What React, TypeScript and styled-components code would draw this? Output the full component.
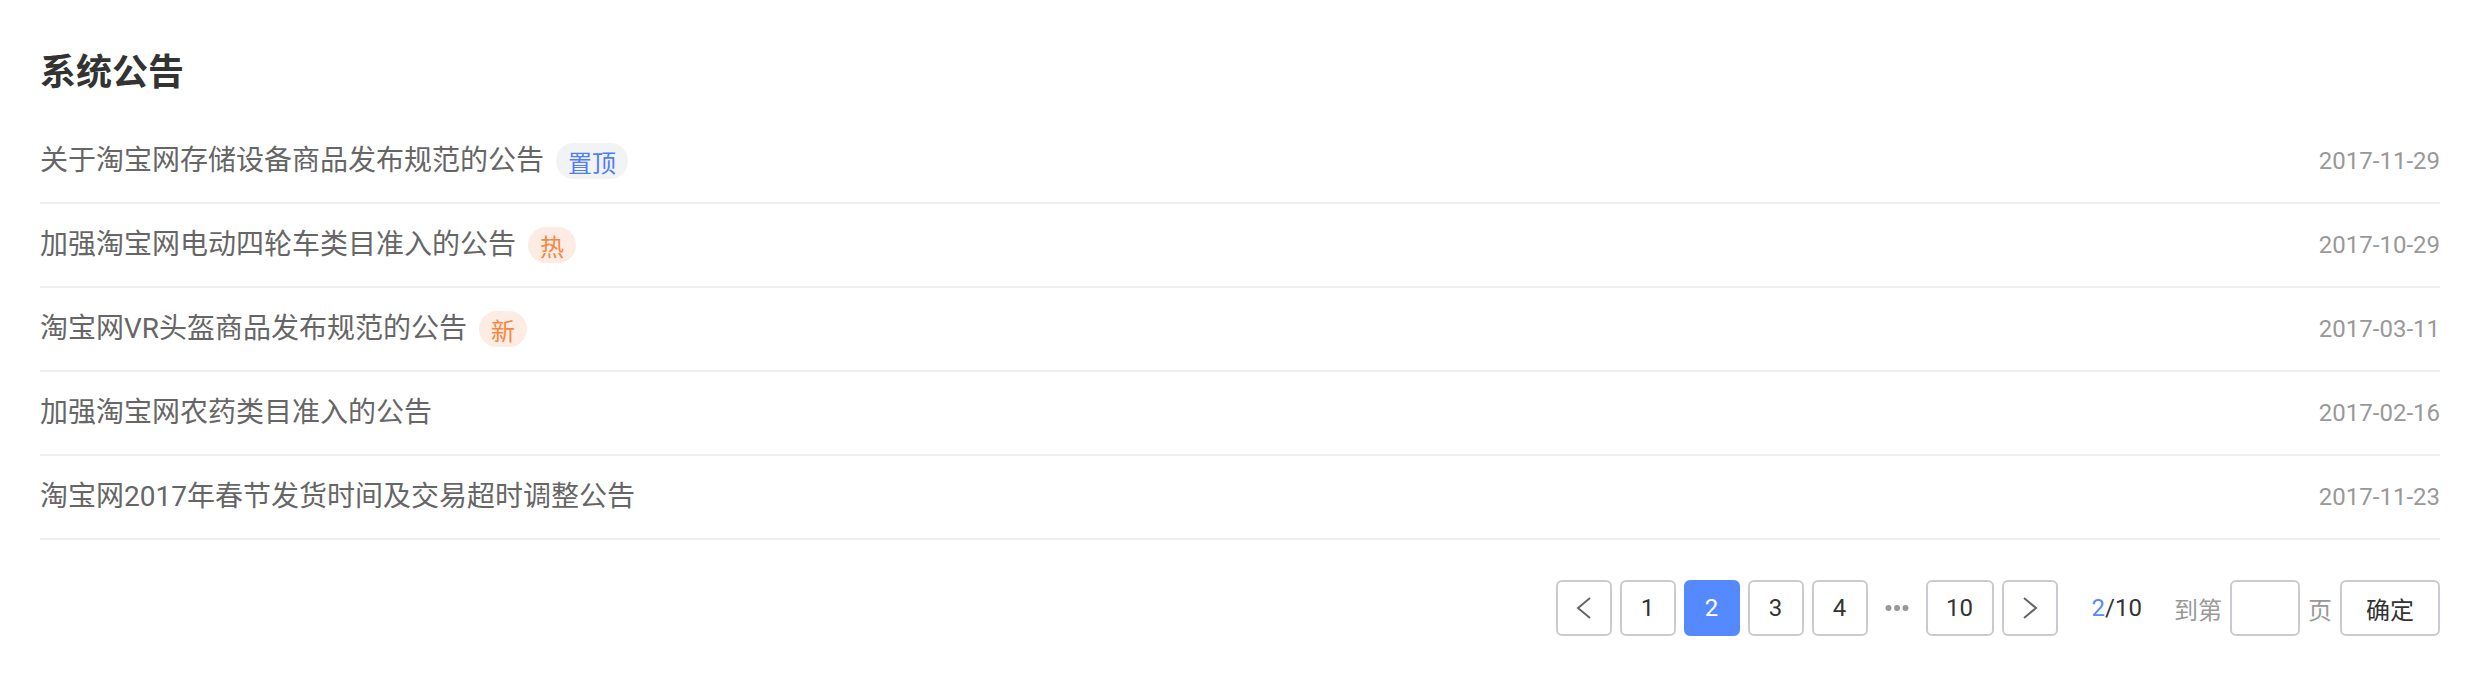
import React from "react";
import styled, { createGlobalStyle } from "styled-components";

const GlobalStyle = createGlobalStyle`
  html, body {
    margin: 0;
    padding: 0;
    background: #ffffff;
  }
  body {
    font-family: Roboto, "Noto Sans CJK SC", "Noto Sans", sans-serif;
    -webkit-font-smoothing: antialiased;
  }
`;

const Page = styled.div`
  width: 2480px;
  box-sizing: border-box;
  padding: 42px 40px 0;
`;

const Title = styled.h2`
  margin: 0;
  font-size: 36px;
  line-height: 54px;
  font-weight: 600;
  color: #333333;
  font-family: "Noto Sans CJK SC", sans-serif;
`;

const List = styled.ul`
  list-style: none;
  margin: 24px 0 0;
  padding: 0;
`;

const Row = styled.li`
  display: flex;
  align-items: center;
  justify-content: space-between;
  height: 82px;
  border-bottom: 2px solid #f0f0f0;
`;

const RowMain = styled.div`
  display: flex;
  align-items: center;
  gap: 12px;
`;

const RowText = styled.span`
  font-size: 28px;
  line-height: 40px;
  color: #666666;
  font-family: Roboto, "Noto Sans CJK SC", sans-serif;
`;

type TagKind = "top" | "hot" | "new";

const tagColors: Record<TagKind, { bg: string; fg: string }> = {
  top: { bg: "#f2f3f5", fg: "#4f7dff" },
  hot: { bg: "#fdece3", fg: "#f5873f" },
  new: { bg: "#fdece3", fg: "#f5873f" },
};

const Tag = styled.span<{ $kind: TagKind }>`
  display: inline-flex;
  align-items: center;
  height: 36px;
  padding: 0 12px;
  border-radius: 18px;
  font-size: 24px;
  font-family: "Noto Sans CJK SC", sans-serif;
  background: ${(p) => tagColors[p.$kind].bg};
  color: ${(p) => tagColors[p.$kind].fg};
`;

const DateText = styled.span`
  font-size: 24px;
  color: #999999;
  font-family: Roboto, sans-serif;
`;

const Footer = styled.div`
  display: flex;
  justify-content: flex-end;
  align-items: center;
  margin-top: 40px;
  font-family: Roboto, "Noto Sans CJK SC", sans-serif;
  font-size: 24px;
`;

const Pager = styled.div`
  display: flex;
  align-items: center;
  gap: 8px;
`;

const PageButton = styled.button<{ $active?: boolean; $wide?: boolean }>`
  box-sizing: border-box;
  width: ${(p) => (p.$wide ? "68px" : "56px")};
  height: 56px;
  padding: 0;
  display: inline-flex;
  align-items: center;
  justify-content: center;
  border-radius: 6px;
  border: 2px solid ${(p) => (p.$active ? "#5589ff" : "#c9cbd1")};
  background: ${(p) => (p.$active ? "#5589ff" : "#ffffff")};
  color: ${(p) => (p.$active ? "#ffffff" : "#333333")};
  font-family: Roboto, sans-serif;
  font-size: 24px;
  cursor: pointer;
`;

const Ellipsis = styled.span`
  display: inline-flex;
  align-items: center;
  justify-content: center;
  width: 42px;
  height: 56px;
`;

const PageInfo = styled.span`
  margin-left: 34px;
  color: #333333;
  font-size: 24px;
`;

const Current = styled.span`
  color: #5589ff;
`;

const Jumper = styled.div`
  display: flex;
  align-items: center;
  gap: 8px;
  margin-left: 32px;
`;

const Label = styled.span`
  color: #999999;
  font-size: 24px;
  font-family: "Noto Sans CJK SC", sans-serif;
`;

const JumpInput = styled.input`
  box-sizing: border-box;
  width: 70px;
  height: 56px;
  border: 2px solid #c9cbd1;
  border-radius: 6px;
  outline: none;
  font-size: 24px;
  text-align: center;
`;

const ConfirmButton = styled.button`
  box-sizing: border-box;
  height: 56px;
  padding: 0 24px;
  border: 2px solid #c9cbd1;
  border-radius: 6px;
  background: #ffffff;
  color: #333333;
  font-size: 24px;
  font-family: "Noto Sans CJK SC", sans-serif;
  cursor: pointer;
`;

const Chevron = ({ dir }: { dir: "left" | "right" }) => (
  <svg width="16" height="22" viewBox="0 0 16 22" fill="none">
    <polyline
      points={dir === "left" ? "14,1 2,11 14,21" : "2,1 14,11 2,21"}
      stroke="#666666"
      strokeWidth="2"
      strokeLinejoin="miter"
    />
  </svg>
);

const Dots = () => (
  <svg width="24" height="8" viewBox="0 0 24 8">
    <circle cx="3.5" cy="4" r="3" fill="#999999" />
    <circle cx="12" cy="4" r="3" fill="#999999" />
    <circle cx="20.5" cy="4" r="3" fill="#999999" />
  </svg>
);

const notices: { title: string; tag?: { kind: TagKind; label: string }; date: string }[] = [
  { title: "关于淘宝网存储设备商品发布规范的公告", tag: { kind: "top", label: "置顶" }, date: "2017-11-29" },
  { title: "加强淘宝网电动四轮车类目准入的公告", tag: { kind: "hot", label: "热" }, date: "2017-10-29" },
  { title: "淘宝网VR头盔商品发布规范的公告", tag: { kind: "new", label: "新" }, date: "2017-03-11" },
  { title: "加强淘宝网农药类目准入的公告", date: "2017-02-16" },
  { title: "淘宝网2017年春节发货时间及交易超时调整公告", date: "2017-11-23" },
];

export default function App() {
  return (
    <>
      <GlobalStyle />
      <Page>
        <Title>系统公告</Title>
        <List>
          {notices.map((n) => (
            <Row key={n.title}>
              <RowMain>
                <RowText>{n.title}</RowText>
                {n.tag && <Tag $kind={n.tag.kind}>{n.tag.label}</Tag>}
              </RowMain>
              <DateText>{n.date}</DateText>
            </Row>
          ))}
        </List>
        <Footer>
          <Pager>
            <PageButton aria-label="上一页">
              <Chevron dir="left" />
            </PageButton>
            <PageButton>1</PageButton>
            <PageButton $active>2</PageButton>
            <PageButton>3</PageButton>
            <PageButton>4</PageButton>
            <Ellipsis>
              <Dots />
            </Ellipsis>
            <PageButton $wide>10</PageButton>
            <PageButton aria-label="下一页">
              <Chevron dir="right" />
            </PageButton>
          </Pager>
          <PageInfo>
            <Current>2</Current>/10
          </PageInfo>
          <Jumper>
            <Label>到第</Label>
            <JumpInput />
            <Label>页</Label>
            <ConfirmButton>确定</ConfirmButton>
          </Jumper>
        </Footer>
      </Page>
    </>
  );
}
